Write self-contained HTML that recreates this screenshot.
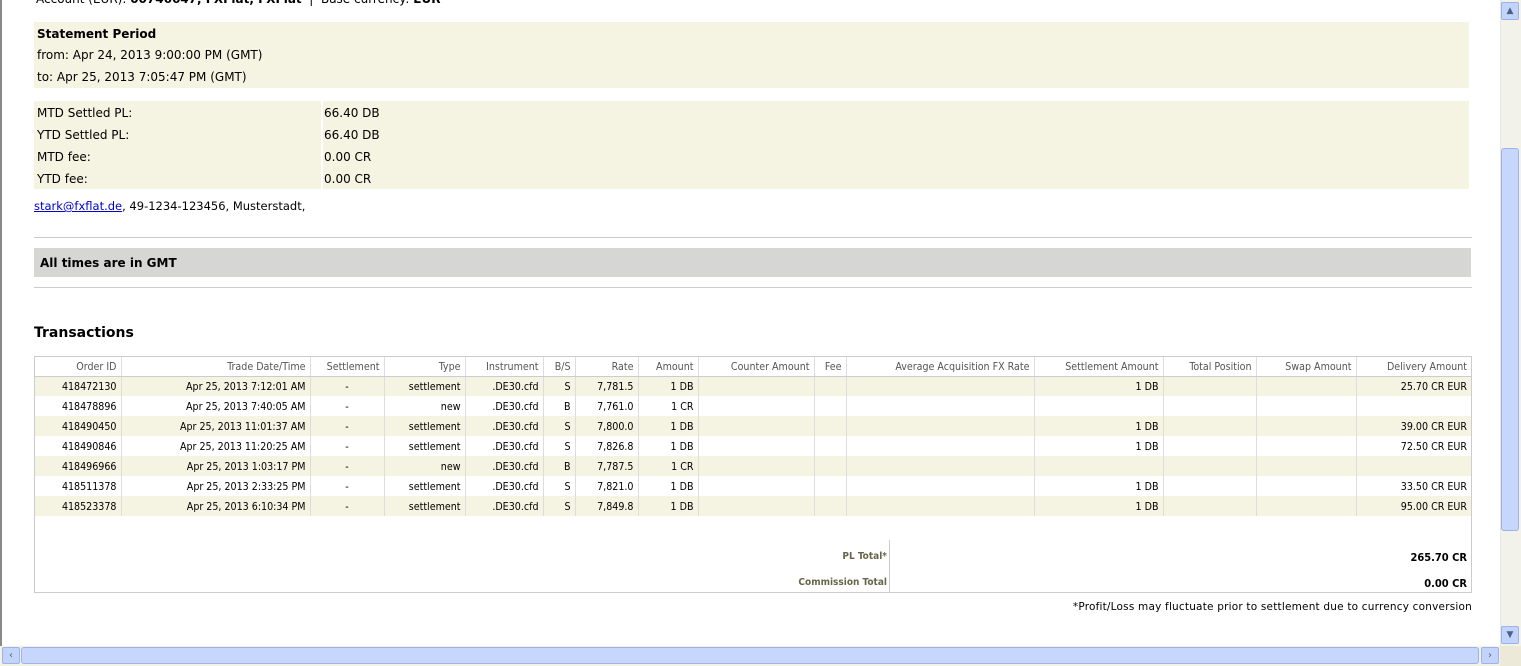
<!DOCTYPE html>
<html><head><meta charset="utf-8"><style>
*{margin:0;padding:0;box-sizing:border-box}
body{width:1521px;height:666px;overflow:hidden;background:#fff;font-family:"DejaVu Sans","Liberation Sans",sans-serif;font-size:12px;color:#000;position:relative}
.abs{position:absolute}
.bg{background:#f5f3e2}
.line{height:20px;line-height:20px;padding-left:3px}
table{border-collapse:collapse;table-layout:fixed;font-size:10.6px;font-family:"DejaVu Sans Condensed","DejaVu Sans",sans-serif}
td{height:20px;text-align:right;padding:1px 4px 0;border-left:1px solid #ddd;white-space:nowrap;overflow:hidden}
tr.h td{height:19px;color:#555;border-bottom:1px solid #ccc}
tr.o td{background:#f5f3e2}
tr td:first-child{border-left:none}
td.c{text-align:center}
</style></head><body>
<div class="abs" style="left:0;top:0;width:2px;height:666px;background:#8a8a8a"></div>
<div class="abs" style="left:36px;top:-8px;font-size:12px;color:#000">Account (EUR): <b>00746647, FXFlat, FXFlat</b> &nbsp;| &nbsp;Base currency: <b>EUR</b></div>

<div class="abs bg" style="left:34px;top:22px;width:1435px;height:66px;padding-top:2px">
<div class="line" style="font-weight:bold">Statement Period</div>
<div class="line" style="height:22px;line-height:22px">from: Apr 24, 2013 9:00:00 PM (GMT)</div>
<div class="line" style="height:22px;line-height:22px">to: Apr 25, 2013 7:05:47 PM (GMT)</div>
</div>

<div class="abs bg" style="left:34px;top:101px;width:1435px;height:88px;padding-top:1px">
<div class="abs" style="left:287px;top:0;width:2px;height:88px;background:#fff"></div>
<div class="line" style="height:22px;line-height:22px">MTD Settled PL:<span class="abs" style="left:290px">66.40 DB</span></div>
<div class="line" style="height:22px;line-height:22px">YTD Settled PL:<span class="abs" style="left:290px">66.40 DB</span></div>
<div class="line" style="height:22px;line-height:22px">MTD fee:<span class="abs" style="left:290px">0.00 CR</span></div>
<div class="line" style="height:22px;line-height:22px">YTD fee:<span class="abs" style="left:290px">0.00 CR</span></div>
</div>

<div class="abs" style="left:34px;top:199px;font-size:11.5px"><span style="color:#00c;text-decoration:underline">stark@fxflat.de</span>, 49-1234-123456, Musterstadt,</div>
<div class="abs" style="left:34px;top:237px;width:1438px;height:1px;background:#ccc"></div>
<div class="abs" style="left:34px;top:248px;width:1437px;height:29px;background:#d6d6d4;font-weight:bold;font-size:12px;line-height:30px;padding-left:6px">All times are in GMT</div>
<div class="abs" style="left:34px;top:287px;width:1438px;height:1px;background:#ccc"></div>
<div class="abs" style="left:34px;top:325px;font-weight:bold;font-size:14px">Transactions</div>

<div class="abs" style="left:34px;top:356px;width:1438px;height:237px;border:1px solid #ccc">
<table style="width:1436px">
<colgroup><col style="width:86px"><col style="width:189px"><col style="width:74px"><col style="width:81px"><col style="width:78px"><col style="width:32px"><col style="width:63px"><col style="width:60px"><col style="width:116px"><col style="width:32px"><col style="width:188px"><col style="width:129px"><col style="width:93px"><col style="width:100px"><col style="width:115px"></colgroup>
<tr class="h"><td>Order ID</td><td>Trade Date/Time</td><td>Settlement</td><td>Type</td><td>Instrument</td><td>B/S</td><td>Rate</td><td>Amount</td><td>Counter Amount</td><td>Fee</td><td>Average Acquisition FX Rate</td><td>Settlement Amount</td><td>Total Position</td><td>Swap Amount</td><td>Delivery Amount</td></tr>
<tr class="o"><td>418472130</td><td>Apr 25, 2013 7:12:01 AM</td><td class="c">-</td><td>settlement</td><td>.DE30.cfd</td><td>S</td><td>7,781.5</td><td>1 DB</td><td></td><td></td><td></td><td>1 DB</td><td></td><td></td><td>25.70 CR EUR</td></tr>
<tr><td>418478896</td><td>Apr 25, 2013 7:40:05 AM</td><td class="c">-</td><td>new</td><td>.DE30.cfd</td><td>B</td><td>7,761.0</td><td>1 CR</td><td></td><td></td><td></td><td></td><td></td><td></td><td></td></tr>
<tr class="o"><td>418490450</td><td>Apr 25, 2013 11:01:37 AM</td><td class="c">-</td><td>settlement</td><td>.DE30.cfd</td><td>S</td><td>7,800.0</td><td>1 DB</td><td></td><td></td><td></td><td>1 DB</td><td></td><td></td><td>39.00 CR EUR</td></tr>
<tr><td>418490846</td><td>Apr 25, 2013 11:20:25 AM</td><td class="c">-</td><td>settlement</td><td>.DE30.cfd</td><td>S</td><td>7,826.8</td><td>1 DB</td><td></td><td></td><td></td><td>1 DB</td><td></td><td></td><td>72.50 CR EUR</td></tr>
<tr class="o"><td>418496966</td><td>Apr 25, 2013 1:03:17 PM</td><td class="c">-</td><td>new</td><td>.DE30.cfd</td><td>B</td><td>7,787.5</td><td>1 CR</td><td></td><td></td><td></td><td></td><td></td><td></td><td></td></tr>
<tr><td>418511378</td><td>Apr 25, 2013 2:33:25 PM</td><td class="c">-</td><td>settlement</td><td>.DE30.cfd</td><td>S</td><td>7,821.0</td><td>1 DB</td><td></td><td></td><td></td><td>1 DB</td><td></td><td></td><td>33.50 CR EUR</td></tr>
<tr class="o"><td>418523378</td><td>Apr 25, 2013 6:10:34 PM</td><td class="c">-</td><td>settlement</td><td>.DE30.cfd</td><td>S</td><td>7,849.8</td><td>1 DB</td><td></td><td></td><td></td><td>1 DB</td><td></td><td></td><td>95.00 CR EUR</td></tr>
</table>
<div class="abs" style="left:854px;top:183px;width:1px;height:53px;background:#ccc"></div>
<div class="abs" style="right:584px;top:194px;font-size:10px;font-weight:bold;color:#66664a;font-family:'DejaVu Sans Condensed',sans-serif">PL Total*</div>
<div class="abs" style="right:584px;top:220px;font-size:10px;font-weight:bold;color:#66664a;font-family:'DejaVu Sans Condensed',sans-serif">Commission Total</div>
<div class="abs" style="right:4px;top:194px;font-size:11px;font-weight:bold;font-family:'DejaVu Sans Condensed',sans-serif">265.70 CR</div>
<div class="abs" style="right:4px;top:220px;font-size:11px;font-weight:bold;font-family:'DejaVu Sans Condensed',sans-serif">0.00 CR</div>
</div>
<div class="abs" style="right:49px;top:601px;font-size:10.5px;letter-spacing:0.2px">*Profit/Loss may fluctuate prior to settlement due to currency conversion</div>

<div class="abs" style="left:1500px;top:0;width:21px;height:646px;background:#f2f1ea;border-left:1px solid #e8e8e0"></div>
<div class="abs" style="left:1501px;top:2px;width:18px;height:18px;background:#c3d4fb;border:1px solid #9db3e8;border-radius:2px;color:#4d6185;font-size:9px;text-align:center;line-height:16px">▲</div>
<div class="abs" style="left:1501px;top:148px;width:18px;height:383px;background:#c7d6fb;border:1px solid #9db3e8;border-radius:3px"></div>
<div class="abs" style="left:1501px;top:626px;width:18px;height:18px;background:#c3d4fb;border:1px solid #9db3e8;border-radius:2px;color:#4d6185;font-size:9px;text-align:center;line-height:16px">▼</div>
<div class="abs" style="left:0;top:646px;width:1500px;height:20px;background:#f2f1ea"></div>
<div class="abs" style="left:2px;top:647px;width:18px;height:17px;background:#c3d4fb;border:1px solid #9db3e8;border-radius:2px;color:#4d6185;font-size:10px;text-align:center;line-height:15px">‹</div>
<div class="abs" style="left:21px;top:647px;width:1458px;height:17px;background:#c7d6fb;border:1px solid #9db3e8;border-radius:3px"></div>
<div class="abs" style="left:1481px;top:647px;width:18px;height:17px;background:#c3d4fb;border:1px solid #9db3e8;border-radius:2px;color:#4d6185;font-size:10px;text-align:center;line-height:15px">›</div>
<div class="abs" style="left:1500px;top:646px;width:21px;height:20px;background:#ece9d8"></div>
</body></html>
